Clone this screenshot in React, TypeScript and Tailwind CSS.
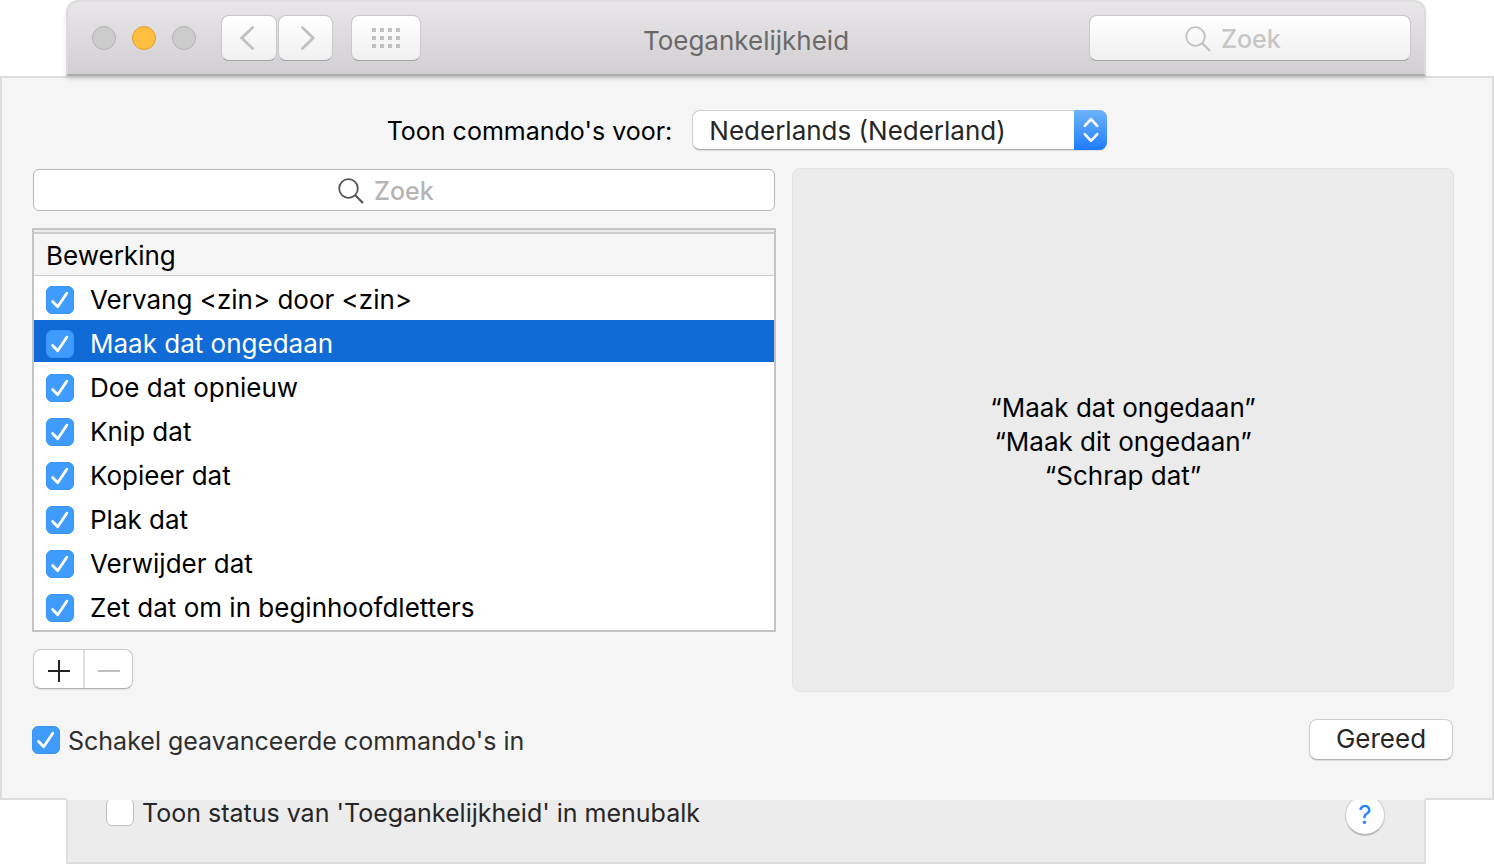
import React, { useId, useState } from 'react';
import clsx from 'clsx';

interface Command {
  id: string;
  label: string;
  phrases: string[];
}

const commands: Command[] = [
  { id: 'replace', label: 'Vervang <zin> door <zin>', phrases: ['“Vervang <zin> door <zin>”'] },
  {
    id: 'undo',
    label: 'Maak dat ongedaan',
    phrases: ['“Maak dat ongedaan”', '“Maak dit ongedaan”', '“Schrap dat”'],
  },
  { id: 'redo', label: 'Doe dat opnieuw', phrases: ['“Doe dat opnieuw”'] },
  { id: 'cut', label: 'Knip dat', phrases: ['“Knip dat”'] },
  { id: 'copy', label: 'Kopieer dat', phrases: ['“Kopieer dat”'] },
  { id: 'paste', label: 'Plak dat', phrases: ['“Plak dat”'] },
  { id: 'delete', label: 'Verwijder dat', phrases: ['“Verwijder dat”'] },
  { id: 'capitalize', label: 'Zet dat om in beginhoofdletters', phrases: ['“Zet dat om in beginhoofdletters”'] },
];

const Checkbox: React.FC<{ id: string; defaultChecked?: boolean }> = ({ id, defaultChecked }) => (
  <span className="grid size-7 shrink-0">
    <input
      id={id}
      type="checkbox"
      defaultChecked={defaultChecked}
      className="peer col-start-1 row-start-1 size-7 appearance-none rounded-md border border-[#bdbdbd] bg-white checked:border-[#3794fb] checked:bg-[#3f9bfc]"
    />
    <svg
      viewBox="0 0 28 28"
      className="pointer-events-none invisible col-start-1 row-start-1 size-7 peer-checked:visible"
      fill="none"
      stroke="white"
      strokeWidth="2.8"
      strokeLinecap="round"
      strokeLinejoin="round"
    >
      <path d="M6.6 15.6 11.7 20.8 20.8 7.2" />
    </svg>
  </span>
);

const SearchIcon: React.FC<{ className?: string }> = ({ className }) => (
  <svg viewBox="0 0 26 26" className={clsx('size-[26px] shrink-0', className)} fill="none" stroke="currentColor">
    <circle cx="10.5" cy="10.5" r="9.3" strokeWidth="1.8" />
    <path d="M17.2 17.2 25 25" strokeWidth="2.2" />
  </svg>
);

const toolbarButton =
  'flex h-[46px] items-center justify-center rounded-lg border border-[#c9c7c9] border-b-[#a3a1a4] bg-linear-to-b from-white to-[#f0f0f0] text-[#c0c0c0]';

const TitleBar: React.FC = () => (
  <header className="relative z-10 mr-[68px] ml-[66px] grid h-[76px] grid-cols-[1fr_auto_1fr] items-center rounded-t-xl border-2 border-[#dddcdd] border-b-[#acaaac] bg-linear-to-b from-[#e8e6e9] to-[#d1cfd2] px-[13px] shadow-[0_4px_4px_rgba(0,0,0,0.1)]">
    <div className="flex items-center pl-[11px]">
      <div className="mr-[25px] flex gap-4">
        <button aria-label="Sluit" className="size-6 rounded-full border border-[#b3b1b3] bg-[#cdcccd]" />
        <button aria-label="Minimaliseer" className="size-6 rounded-full border border-[#e09c2f] bg-[#ffbe3f]" />
        <button aria-label="Vergroot" className="size-6 rounded-full border border-[#b3b1b3] bg-[#cdcccd]" />
      </div>
      <div className="mr-[18px] flex gap-px">
        <button aria-label="Vorige" className={clsx(toolbarButton, 'w-14')}>
          <svg viewBox="0 0 14 24" className="mr-1 h-6 w-3.5" fill="none" stroke="currentColor" strokeWidth="2.8" strokeLinecap="round">
            <path d="M12.6 1.6 1.8 12 12.6 22.4" />
          </svg>
        </button>
        <button aria-label="Volgende" className={clsx(toolbarButton, 'w-[55px]')}>
          <svg viewBox="0 0 14 24" className="ml-1 h-6 w-3.5" fill="none" stroke="currentColor" strokeWidth="2.8" strokeLinecap="round">
            <path d="M1.4 1.6 12.2 12 1.4 22.4" />
          </svg>
        </button>
      </div>
      <button aria-label="Toon alles" className={clsx(toolbarButton, 'w-[70px]')}>
        <svg viewBox="0 0 28 20" className="h-5 w-7" fill="currentColor">
          {[0, 8, 16].map((y) => [0, 8, 16, 24].map((x) => <rect key={`${x}-${y}`} x={x} y={y} width="4" height="4" />))}
        </svg>
      </button>
    </div>
    <h1 className="pt-1.5 text-[#6a696a]">Toegankelijkheid</h1>
    <label className={clsx(toolbarButton, 'w-[322px] gap-2.5 justify-self-end pt-0.5 pl-0.5')}>
      <SearchIcon />
      <input
        type="search"
        aria-label="Zoek in voorkeuren"
        placeholder="Zoek"
        className="w-24 bg-transparent text-[25px] font-medium outline-none placeholder:text-[#c6c6c6]"
      />
    </label>
  </header>
);

const CommandList: React.FC<{ selectedId: string; onSelect: (id: string) => void }> = ({ selectedId, onSelect }) => (
  <section className="border-2 border-[#c4c4c4] bg-white pb-0.5">
    <div className="h-1 border-b-2 border-[#cdcdcd] bg-[#ececec]" />
    <h2 className="flex h-[42px] items-center border-b border-[#c8c8c8] bg-[#f5f5f5] px-3 pt-0.5">Bewerking</h2>
    <ul>
      {commands.map((command) => (
        <li
          key={command.id}
          onClick={() => onSelect(command.id)}
          className={clsx(
            'flex h-11 items-center gap-4 border-b-2 border-white px-3 pt-1.5',
            command.id === selectedId && 'bg-[#116bd6] text-white',
          )}
        >
          <Checkbox id={command.id} defaultChecked />
          <label htmlFor={command.id}>{command.label}</label>
        </li>
      ))}
    </ul>
  </section>
);

export default function App() {
  const [selectedId, setSelectedId] = useState('undo');
  const languageId = useId();
  const selected = commands.find((command) => command.id === selectedId);

  return (
    <div className="bg-white font-['Inter','Liberation_Sans',sans-serif] text-[26px] leading-[34px] text-black">
      <TitleBar />

      <main className="border-2 border-[#dddddd] bg-[#f5f5f5] pt-8 pr-[38px] pb-[38px] pl-[30px]">
        <div className="flex items-center justify-center gap-5 pl-2">
          <label htmlFor={languageId} className="pt-0.5 text-[25px]">
            Toon commando's voor:
          </label>
          <div className="relative w-[415px]">
            <select
              id={languageId}
              className="block h-10 w-full appearance-none rounded-lg border border-[#cfcfcf] border-b-[#b0b0b0] bg-white pt-0.5 pr-10 pl-4 text-[#262626] shadow-[0_1px_1px_rgba(0,0,0,0.1)]"
            >
              <option>Nederlands (Nederland)</option>
            </select>
            <span className="pointer-events-none absolute inset-y-0 right-0 flex w-[33px] items-center justify-center rounded-r-lg bg-linear-to-b from-[#6cb3fa] to-[#1a7bfe]">
              <svg viewBox="0 0 16 26" className="h-[26px] w-4" fill="none" stroke="white" strokeWidth="2.6" strokeLinecap="round" strokeLinejoin="round">
                <path d="M1.8 8.8 8 2.2 14.2 8.8M1.8 17.2 8 23.8 14.2 17.2" />
              </svg>
            </span>
          </div>
        </div>

        <div className="mt-[18px] grid grid-cols-[744fr_662fr] gap-4">
          <div className="flex flex-col pb-[3px]">
            <label className="mx-px mt-px flex h-[42px] items-center justify-center gap-2.5 rounded-md border border-[#b9b9b9] bg-white pt-0.5">
              <SearchIcon className="text-[#555555]" />
              <input
                type="search"
                aria-label="Zoek in commando's"
                placeholder="Zoek"
                className="w-24 bg-transparent text-[25px] font-medium outline-none placeholder:text-[#b4b4b4]"
              />
            </label>

            <div className="mt-[17px]">
              <CommandList selectedId={selectedId} onSelect={setSelectedId} />
            </div>

            <div className="mt-[17px] ml-px flex h-10 w-[100px] rounded-lg border border-[#cbcbcb] border-b-[#b0b0b0] bg-white shadow-[0_1px_1px_rgba(0,0,0,0.08)]">
              <button aria-label="Voeg toe" className="flex w-[51px] items-center justify-center border-r-2 border-[#e0e0e0] pt-1">
                <svg viewBox="0 0 22 22" className="size-[22px]" stroke="#222222" strokeWidth="2">
                  <path d="M0 11H22M11 0V22" />
                </svg>
              </button>
              <button aria-label="Verwijder" disabled className="flex flex-1 items-center justify-center pt-1">
                <svg viewBox="0 0 22 22" className="size-[22px]" stroke="#bfbfbf" strokeWidth="2">
                  <path d="M0 11H22" />
                </svg>
              </button>
            </div>
          </div>

          <div className="flex flex-col items-center justify-center rounded-lg border border-[#e2e2e2] bg-[#ebebeb] pt-6">
            {selected?.phrases.map((phrase) => (
              <p key={phrase}>{phrase}</p>
            ))}
          </div>
        </div>

        <div className="mt-[27px] flex items-center justify-between pr-px">
          <div className="flex items-center gap-2">
            <Checkbox id="advanced" defaultChecked />
            <label htmlFor="advanced" className="pt-0.5 text-[25px] text-[#2e2e2e]">
              Schakel geavanceerde commando's in
            </label>
          </div>
          <button className="h-[41px] w-36 rounded-lg border border-[#cfcfcf] border-b-[#b0b0b0] bg-white pb-0.5 text-[#262626] shadow-[0_1px_1px_rgba(0,0,0,0.1)]">
            Gereed
          </button>
        </div>
      </main>

      {/* the window behind the sheet, its top row partly covered */}
      <footer className="relative -mt-0.5 mr-[68px] ml-[66px] h-[66px] overflow-hidden border-2 border-[#dddddd] border-t-[#f5f5f5] bg-[#ececec]">
        <div className="-mt-[5px] flex items-start justify-between pr-[39px] pl-[38px]">
          <div className="flex items-center gap-2">
            <Checkbox id="menubar" />
            <label htmlFor="menubar" className="pt-0.5 text-[25px] leading-8 text-[#262626]">
              Toon status van 'Toegankelijkheid' in menubalk
            </label>
          </div>
          <button
            aria-label="Help"
            className="size-10 rounded-full border border-[#cfcfcf] border-b-[#b0b0b0] bg-white text-[#1a83ff] shadow-[0_1px_1px_rgba(0,0,0,0.15)]"
          >
            ?
          </button>
        </div>
      </footer>
    </div>
  );
}
